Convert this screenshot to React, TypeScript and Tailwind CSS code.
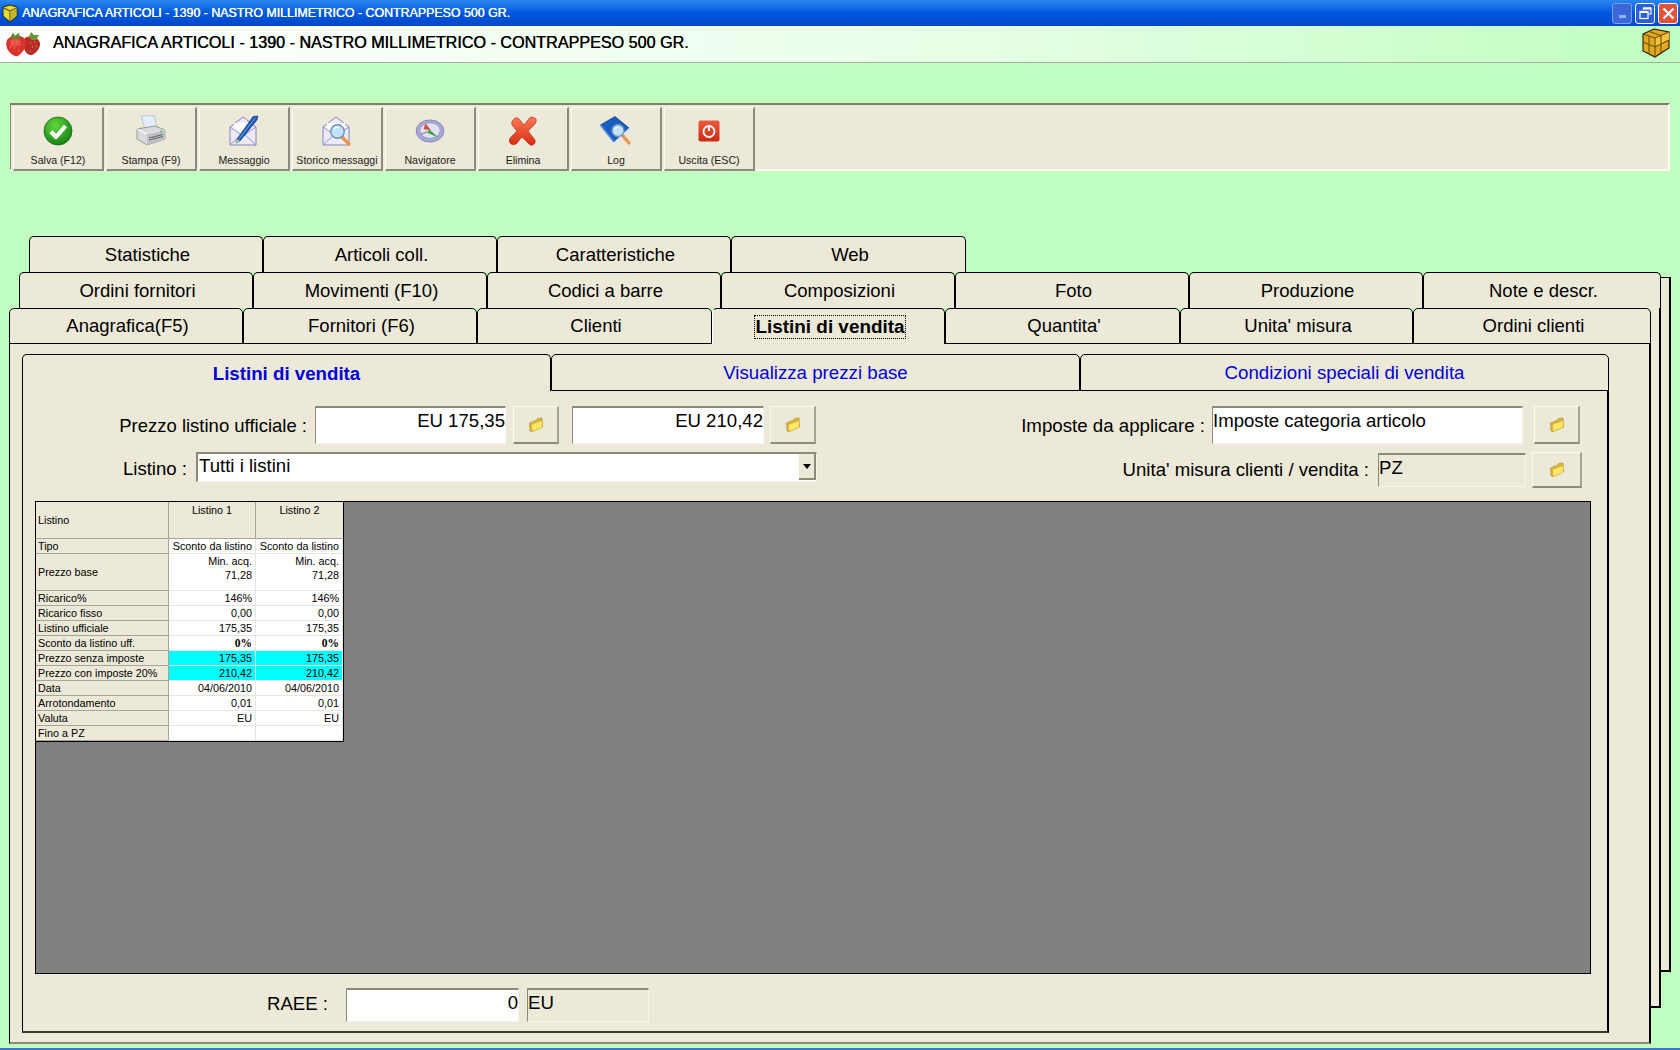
import type { ReactNode } from "react";

const TAB_ROW_1 = [["Statistiche", 234], ["Articoli coll.", 234], ["Caratteristiche", 234], ["Web", 235]] as const;
const TAB_ROW_2 = [["Ordini fornitori", 234], ["Movimenti (F10)", 234], ["Codici a barre", 234], ["Composizioni", 234], ["Foto", 234], ["Produzione", 234], ["Note e descr.", 238]] as const;
const TAB_ROW_3 = [["Anagrafica(F5)", 234], ["Fornitori (F6)", 234], ["Clienti", 235], ["Listini di vendita", 233], ["Quantita'", 235], ["Unita' misura", 233], ["Ordini clienti", 238]] as const;

const PRICE_ROWS = [
    { label: "Tipo", h: "h-[15px]", value: "Sconto da listino" },
    { label: "Prezzo base", h: "h-[37px]", value: "Min. acq.", second: "71,28" },
    { label: "Ricarico%", h: "h-[15px]", value: "146%" },
    { label: "Ricarico fisso", h: "h-[15px]", value: "0,00" },
    { label: "Listino ufficiale", h: "h-[15px]", value: "175,35" },
    { label: "Sconto da listino uff.", h: "h-[15px]", value: "0%", bold: true },
    { label: "Prezzo senza imposte", h: "h-[15px]", value: "175,35", cyan: true },
    { label: "Prezzo con imposte 20%", h: "h-[15px]", value: "210,42", cyan: true },
    { label: "Data", h: "h-[15px]", value: "04/06/2010" },
    { label: "Arrotondamento", h: "h-[15px]", value: "0,01" },
    { label: "Valuta", h: "h-[15px]", value: "EU" },
    { label: "Fino a PZ", h: "h-[15px]", value: "" },
];

function Tab({ label, width, active, bottom }: { label: string; width: number; active?: boolean; bottom?: boolean }) {
    return (
        <div
            className={`h-[36px] shrink-0 flex items-center justify-center pl-[3px] rounded-t-[5px] border-t border-l border-r border-black bg-[#ece9d8] text-[18.5px] text-black ${bottom && !active ? "border-b" : ""} ${active ? "font-bold border-l-white" : ""}`}
            style={{ width }}
        >
            {active ? <span className="border border-dotted border-black leading-[22px] text-[18.9px]">{label}</span> : label}
        </div>
    );
}

function InnerTab({ label, width, active }: { label: string; width: number; active?: boolean }) {
    return (
        <div
            className={`h-[37px] shrink-0 flex items-center justify-center pt-[2px] rounded-t-[5px] border-t border-l border-r border-black bg-[#ece9d8] text-[18.7px] text-[#0000d8] ${active ? "font-bold" : "border-b"}`}
            style={{ width }}
        >
            {label}
        </div>
    );
}

function Sunken({ width, height, right, muted, children }: { width: string; height: string; right?: boolean; muted?: boolean; children: ReactNode }) {
    return (
        <div className={`${width} ${height} shrink-0 border-t-2 border-l border-b border-r border-t-[#8c8a7c] border-l-[#8c8a7c] border-b-[#f6f5ec] border-r-[#f6f5ec] text-[18.6px] leading-[26px] text-black ${right ? "text-right" : ""} ${muted ? "bg-[#ece9d8]" : "bg-white"}`}>
            {children}
        </div>
    );
}

function FolderButton({ width, height }: { width: string; height: string }) {
    return (
        <div className={`${width} ${height} shrink-0 flex items-center justify-center border-t border-l border-b-2 border-r-2 border-t-[#fbfaf4] border-l-[#fbfaf4] border-b-[#8c8a7c] border-r-[#a5a294] bg-[#ece9d8]`}>
            <svg width="16" height="16" viewBox="0 0 16 16">
                <path d="M1.5 6 L8.5 3 L9.5 1.5 L14 1 L14.5 10 L4 14.5 L2 14 Z" fill="#d9b53a" stroke="#a98a2c" strokeWidth="0.6" />
                <path d="M3.5 7.5 L14.5 3.5 L14 10.5 L4 14.5 Z" fill="#ffe866" stroke="#c9a636" strokeWidth="0.5" />
            </svg>
        </div>
    );
}

function PriceTable() {
    return (
        <div className="w-[308px] border-r border-b border-black text-[10.8px] leading-[14px] text-black">
            <div className="grid grid-cols-[133px_87px_87px] h-[37px] bg-[#ece9d8] border-b border-[#a8a596]">
                <div className="flex items-center pl-[2px] border-r border-[#a8a596]">Listino</div>
                <div className="text-center pt-[1px] border-r border-[#a8a596]">Listino 1</div>
                <div className="text-center pt-[1px]">Listino 2</div>
            </div>
            {PRICE_ROWS.map((row) => (
                <div key={row.label} className={`grid grid-cols-[133px_87px_87px] ${row.h} ${row.second ? "" : "leading-[13px]"}`}>
                    <div className={`flex items-center pl-[2px] bg-[#ece9d8] border-r border-b border-[#a8a596] ${row.second ? "" : "pt-[1px]"}`}>{row.label}</div>
                    {[0, 1].map((col) => (
                        <div
                            key={col}
                            className={`text-right pr-[3px] border-b border-r border-[#e6e6de] ${row.second ? "" : "pt-[1px]"} ${row.cyan ? "bg-[#00ffff]" : "bg-white"} ${row.bold ? "font-['Liberation_Serif'] font-bold text-[11.5px]" : ""}`}
                        >
                            <div>{row.value}</div>
                            {row.second && <div>{row.second}</div>}
                        </div>
                    ))}
                </div>
            ))}
        </div>
    );
}

function ToolButton({ label, children }: { label: string; children: ReactNode }) {
    return (
        <div className="w-[91px] h-[64px] shrink-0 flex flex-col items-center border-t border-l border-b-2 border-r-2 border-t-[#fbfaf4] border-l-[#fbfaf4] border-b-[#8c8a7c] border-r-[#8c8a7c] bg-[#ece9d8]">
            <div className="h-[44px] mt-[1px] flex items-center justify-center">{children}</div>
            <div className="text-[10.6px] leading-[14px] text-[#1a1a1a] whitespace-nowrap">{label}</div>
        </div>
    );
}

function CheckIcon() {
    return (
        <svg width="30" height="30" viewBox="0 0 30 30">
            <defs>
                <radialGradient id="ck" cx="0.4" cy="0.3" r="0.8">
                    <stop offset="0" stopColor="#63d83c" />
                    <stop offset="1" stopColor="#0c7a12" />
                </radialGradient>
            </defs>
            <circle cx="15" cy="15" r="14" fill="url(#ck)" stroke="#16661a" strokeWidth="0.8" />
            <path d="M8 15.5 L13 21 L22.5 10" fill="none" stroke="#fff" strokeWidth="4.2" strokeLinejoin="round" />
        </svg>
    );
}

function PrinterIcon() {
    return (
        <svg width="32" height="32" viewBox="0 0 32 32">
            <path d="M6 1 L19 0.5 L22 12 L10 14 Z" fill="#e4eefa" stroke="#9fb3c8" strokeWidth="0.7" />
            <path d="M2 14 L20 11 L30 15 L30 24 L12 30 L2 24 Z" fill="#d9dadb" stroke="#85888c" strokeWidth="0.8" />
            <path d="M2 14 L12 19 L30 15" fill="none" stroke="#f6f6f6" strokeWidth="1.2" />
            <path d="M12 19 L12 30 L30 24 L30 15 Z" fill="#bfc1c4" />
            <path d="M14 23 L28 19.5 M14 25 L28 21.5" stroke="#5d6064" strokeWidth="1" />
            <circle cx="26" cy="16.5" r="1" fill="#4fbf4c" />
        </svg>
    );
}

function EnvelopeIcon({ children }: { children: ReactNode }) {
    return (
        <svg width="32" height="32" viewBox="0 0 32 32">
            <path d="M2 12 L15 2 L28 12 L28 30 L2 30 Z" fill="#eceaf8" stroke="#7b78b8" strokeWidth="0.9" />
            <path d="M2 30 L15 18 L28 30 M2 12 L15 21 L28 12" fill="none" stroke="#8d8ac8" strokeWidth="0.9" />
            <path d="M6 13 L6 8 L24 8 L24 13 L15 20 Z" fill="#fff" />
            {children}
        </svg>
    );
}

function PenEnvelopeIcon() {
    return (
        <EnvelopeIcon>
            <path d="M30 1 L25 1.5 L9 24 L8 28 L12 26 L29 5 Z" fill="#1d58b4" stroke="#123c80" strokeWidth="0.6" />
            <path d="M27 3 L11 24" stroke="#7ba8ea" strokeWidth="1" />
            <path d="M9 24 L8 28 L12 26 Z" fill="#d8c9a0" />
        </EnvelopeIcon>
    );
}

function SearchEnvelopeIcon() {
    return (
        <EnvelopeIcon>
            <path d="M21 22 L28 29" stroke="#e9954a" strokeWidth="3.4" strokeLinecap="round" />
            <circle cx="16.5" cy="16.5" r="6.8" fill="#bfe3fa" stroke="#6d8fb8" strokeWidth="1.4" />
            <path d="M13 14 A5 5 0 0 1 18 12.5" fill="none" stroke="#fff" strokeWidth="1.4" />
        </EnvelopeIcon>
    );
}

function CompassIcon() {
    return (
        <svg width="30" height="24" viewBox="0 0 32 26">
            <ellipse cx="16" cy="13" rx="15" ry="12" fill="#a8a8d6" stroke="#7d7db0" strokeWidth="0.9" />
            <ellipse cx="16" cy="12.5" rx="11" ry="8.5" fill="#dfe2f2" stroke="#8f8fbd" strokeWidth="0.8" />
            <path d="M11 5 L17 12 L9 11 Z" fill="#d84a3a" />
            <path d="M15 11 L25 20 L13 15 Z" fill="#3f9a46" />
            <path d="M5 17 L13 14" stroke="#8f8fbe" strokeWidth="1.4" />
        </svg>
    );
}

function DeleteIcon() {
    return (
        <svg width="30" height="30" viewBox="0 0 30 30">
            <defs>
                <linearGradient id="dx" x1="0" y1="0" x2="0" y2="1">
                    <stop offset="0" stopColor="#ff7a55" />
                    <stop offset="1" stopColor="#d52c14" />
                </linearGradient>
            </defs>
            <path d="M5 4 Q8 0 11 3 L16 9 L22 1.5 Q25 0 28 3 Q29 5 27 8 L20 15 L27 24 Q28 27 25 29 Q22 30 20 27 L14 21 L8 28 Q4 30 2 27 Q0 24 3 21 L9 15 L4 9 Q3 6 5 4 Z" fill="url(#dx)" stroke="#b3301c" strokeWidth="0.7" />
        </svg>
    );
}

function LogIcon() {
    return (
        <svg width="32" height="30" viewBox="0 0 32 30">
            <path d="M0.5 9 L15 0.5 L29 12 L14 26 Z" fill="#1a5fc0" stroke="#0f3f8c" strokeWidth="0.8" />
            <path d="M14 26 L16 28 L30 14 L29 12 Z" fill="#dfe8f4" />
            <path d="M0.5 9 L14 26" stroke="#4e8de0" strokeWidth="1.6" />
            <path d="M23 20 L29 27" stroke="#e9954a" strokeWidth="3.2" strokeLinecap="round" />
            <circle cx="18" cy="14.5" r="6" fill="#c3e2f7" stroke="#6d8fb8" strokeWidth="1.3" />
            <path d="M15 13 A4 4 0 0 1 18.5 11" fill="none" stroke="#fff" strokeWidth="1.2" />
        </svg>
    );
}

function ExitIcon() {
    return (
        <svg width="22" height="22" viewBox="0 0 22 22">
            <defs>
                <linearGradient id="ex" x1="0" y1="0" x2="0" y2="1">
                    <stop offset="0" stopColor="#f05a3c" />
                    <stop offset="1" stopColor="#c82a16" />
                </linearGradient>
            </defs>
            <rect x="0.5" y="0.5" width="21" height="21" rx="2" fill="url(#ex)" />
            <circle cx="11" cy="11.5" r="5.5" fill="none" stroke="#fff" strokeWidth="1.8" />
            <path d="M11 5.5 L11 11" stroke="#fff" strokeWidth="2" />
        </svg>
    );
}

function ShieldIcon() {
    return (
        <svg width="16" height="19" viewBox="0 0 16 19">
            <path d="M1 3 L8 1 L15 3 L15 12 L8 18 L1 12 Z" fill="#e6d83a" stroke="#26260c" strokeWidth="1" />
            <path d="M1.5 4 L8 7 L14.5 4 M8 7 L8 17" stroke="#4c4c10" strokeWidth="1.1" fill="none" />
            <path d="M8 7 L14.5 4 L14.5 12 L8 17 Z" fill="#b7a82a" opacity="0.7" />
        </svg>
    );
}

function StrawberryIcon() {
    return (
        <svg width="36" height="26" viewBox="0 0 36 26">
            <path d="M20 7 C27 3 36 8 35 14 C34 20 28 25 25 24 C20 23 16 14 20 7 Z" fill="#b92c26" />
            <path d="M2 9 C5 4 16 3 20 8 C23 13 19 21 13 25 C9 26 4 22 2 17 C1 14 1 11 2 9 Z" fill="#d8342b" />
            <path d="M5 10 C8 7 13 7 16 10 C15 15 10 17 6 15 Z" fill="#ee5f50" opacity="0.7" />
            <path d="M7 12 h1 M11 11 h1 M14 14 h1 M9 17 h1 M13 19 h1 M5 16 h1 M25 12 h1 M29 11 h1 M27 16 h1 M31 15 h1 M25 20 h1" stroke="#f2b47a" strokeWidth="0.9" />
            <path d="M5 7 L8 1.5 L10 5 L14 1.5 L15 7 L11 8 Z" fill="#5f8a2c" />
            <path d="M24 6 L26 1 L29 4 L34 4 L31 9 L27 9 Z" fill="#6c9634" />
        </svg>
    );
}

function BoxIcon() {
    return (
        <svg width="30" height="30" viewBox="0 0 30 30">
            <path d="M3 6 L14 1 L29 4 L29 20 L15 29 L3 23 Z" fill="#e2a822" stroke="#1e1a08" strokeWidth="1.1" />
            <path d="M15 10 L29 4 L29 12 L15 19 Z" fill="#f4c238" />
            <path d="M3 6 L15 10 L29 4" fill="none" stroke="#6e520e" strokeWidth="1.1" />
            <path d="M15 10 L15 29 M3 14 L15 19 L29 12 M9 3.5 L21 7.5 M9 8 L9 25.5 M21 7 L21 25" fill="none" stroke="#6e520e" strokeWidth="1.1" />
        </svg>
    );
}

function WindowButtons() {
    return (
        <div className="flex items-center gap-[3px] mr-[2px]">
            <div className="w-[20px] h-[21px] rounded-[3px] border border-[#7aa0ec] bg-[#3a68d8] flex items-end justify-center pb-[5px]">
                <div className="w-[7px] h-[3px] bg-[#8fb0f0]" />
            </div>
            <div className="w-[20px] h-[21px] rounded-[3px] border border-white bg-[#2c5ed8] flex items-center justify-center">
                <svg width="13" height="13" viewBox="0 0 13 13" fill="none" stroke="#fff" strokeWidth="1.2">
                    <path d="M4.5 3 V1 H12 V7 H9" />
                    <rect x="1" y="4.5" width="8" height="7" />
                    <path d="M1 5 H9 M4.5 1.5 H12" strokeWidth="2" />
                </svg>
            </div>
            <div className="w-[20px] h-[21px] rounded-[3px] border border-white bg-[#e0533a] flex items-center justify-center">
                <svg width="13" height="13" viewBox="0 0 13 13" stroke="#fff" strokeWidth="2.2">
                    <path d="M1.5 1.5 L11.5 11.5 M11.5 1.5 L1.5 11.5" />
                </svg>
            </div>
        </div>
    );
}

export default function App() {
    return (
        <div className="w-[1680px] h-[1050px] overflow-hidden flex flex-col bg-[#c0ffc0] font-['Liberation_Sans',Arial,sans-serif]">
            <div className="h-[26px] shrink-0 flex items-center justify-between bg-gradient-to-b from-[#2a86f0] via-[#0058e0] to-[#0048c8]">
                <div className="flex items-center pl-[2px]">
                    <ShieldIcon />
                    <span className="ml-[4px] text-[12.4px] text-white [text-shadow:0.4px_0_0_#fff]">ANAGRAFICA ARTICOLI - 1390 - NASTRO MILLIMETRICO - CONTRAPPESO 500 GR.</span>
                </div>
                <WindowButtons />
            </div>

            <div className="h-[37px] shrink-0 flex items-center justify-between border-b border-[#a9b0a4] bg-gradient-to-r from-white via-[#ecffec] via-50% to-[#c0ffc0]">
                <div className="flex items-center pl-[5px]">
                    <StrawberryIcon />
                    <span className="ml-[12px] mb-[3px] text-[16.15px] text-black [text-shadow:0.3px_0_0_#000]">ANAGRAFICA ARTICOLI - 1390 - NASTRO MILLIMETRICO - CONTRAPPESO 500 GR.</span>
                </div>
                <div className="mr-[10px] mb-[3px]">
                    <BoxIcon />
                </div>
            </div>

            <div className="ml-[10px] mt-[40px] w-[1660px] h-[68px] shrink-0 flex gap-[2px] pt-[2px] pl-[2px] bg-[#ece9d8] border-t-2 border-l border-b-2 border-r-2 border-t-[#7f7d6e] border-l-[#8c8a7c] border-b-[#fbfaf4] border-r-[#fbfaf4]">
                <ToolButton label="Salva (F12)"><CheckIcon /></ToolButton>
                <ToolButton label="Stampa (F9)"><PrinterIcon /></ToolButton>
                <ToolButton label="Messaggio"><PenEnvelopeIcon /></ToolButton>
                <ToolButton label="Storico messaggi"><SearchEnvelopeIcon /></ToolButton>
                <ToolButton label="Navigatore"><CompassIcon /></ToolButton>
                <ToolButton label="Elimina"><DeleteIcon /></ToolButton>
                <ToolButton label="Log"><LogIcon /></ToolButton>
                <ToolButton label="Uscita (ESC)"><ExitIcon /></ToolButton>
            </div>

            <div className="mt-[65px] flex items-start">
                <div className="w-[1661px] shrink-0">
                    <div className="flex ml-[29px]">
                        {TAB_ROW_1.map(([label, width]) => <Tab key={label} label={label} width={width} />)}
                    </div>
                    <div className="flex ml-[19px]">
                        {TAB_ROW_2.map(([label, width]) => <Tab key={label} label={label} width={width} />)}
                    </div>
                    <div className="flex items-start">
                        <div className="ml-[9px] w-[1642px] shrink-0">
                            <div className="flex">
                                {TAB_ROW_3.map(([label, width]) => <Tab key={label} label={label} width={width} bottom active={label === "Listini di vendita"} />)}
                            </div>
                            <div className="h-[700px] pt-[10px] pl-[12px] bg-[#ece9d8] border-l border-r-2 border-b-2 border-l-black border-r-black border-b-[#8f8a78]">
                                <div className="flex">
                                    <InnerTab label="Listini di vendita" width={529} active />
                                    <InnerTab label="Visualizza prezzi base" width={529} />
                                    <InnerTab label="Condizioni speciali di vendita" width={529} />
                                </div>
                                <div className="w-[1587px] h-[642px] pt-[15px] border-l border-r-2 border-b-2 border-l-black border-r-black border-b-[#3a3830]">
                                    <div className="flex h-[82px]">
                                        <div className="w-[794px] shrink-0">
                                            <div className="flex items-center">
                                                <div className="w-[284px] shrink-0 text-right text-[18.5px] text-black pt-[2px]">Prezzo listino ufficiale :</div>
                                                <div className="ml-[8px]"><Sunken width="w-[191px]" height="h-[38px]" right>EU 175,35</Sunken></div>
                                                <div className="ml-[7px]"><FolderButton width="w-[46px]" height="h-[38px]" /></div>
                                                <div className="ml-[13px]"><Sunken width="w-[192px]" height="h-[38px]" right>EU 210,42</Sunken></div>
                                                <div className="ml-[6px]"><FolderButton width="w-[46px]" height="h-[38px]" /></div>
                                            </div>
                                            <div className="flex items-center mt-[7px]">
                                                <div className="w-[164px] shrink-0 text-right text-[18.6px] text-black pt-[4px]">Listino :</div>
                                                <div className="ml-[9px] w-[621px] h-[30px] shrink-0 flex items-center justify-between bg-white border-t-2 border-l-2 border-b border-r border-t-[#8c8a7c] border-l-[#8c8a7c] border-b-[#f6f5ec] border-r-[#f6f5ec] pl-[1px] text-[18.6px] text-black">
                                                    <span className="-mt-[3px]">Tutti i listini</span>
                                                    <div className="w-[17px] h-[26px] flex items-center justify-center bg-[#ece9d8] border-r-2 border-b-2 border-r-[#8c8a7c] border-b-[#8c8a7c]">
                                                        <svg width="8" height="5" viewBox="0 0 8 5"><path d="M0 0 H8 L4 5 Z" fill="#000" /></svg>
                                                    </div>
                                                </div>
                                            </div>
                                        </div>
                                        <div className="shrink-0">
                                            <div className="flex items-center">
                                                <div className="w-[388px] shrink-0 text-right text-[18.7px] text-black pt-[2px]">Imposte da applicare :</div>
                                                <div className="ml-[7px]"><Sunken width="w-[311px]" height="h-[38px]">Imposte categoria articolo</Sunken></div>
                                                <div className="ml-[11px]"><FolderButton width="w-[46px]" height="h-[38px]" /></div>
                                            </div>
                                            <div className="flex items-center mt-[8px]">
                                                <div className="w-[552px] shrink-0 text-right text-[18.6px] text-black">Unita' misura clienti / vendita :</div>
                                                <div className="ml-[9px]"><Sunken width="w-[148px]" height="h-[34px]" muted>PZ</Sunken></div>
                                                <div className="ml-[6px]"><FolderButton width="w-[50px]" height="h-[36px]" /></div>
                                            </div>
                                        </div>
                                    </div>
                                    <div className="ml-[12px] mt-[13px] w-[1556px] h-[473px] bg-[#808080] border border-black">
                                        <PriceTable />
                                    </div>
                                    <div className="flex items-center mt-[14px]">
                                        <div className="w-[305px] shrink-0 text-right text-[18.6px] text-black -mt-[2px]">RAEE :</div>
                                        <div className="ml-[18px]"><Sunken width="w-[173px]" height="h-[34px]" right>0</Sunken></div>
                                        <div className="ml-[8px]"><Sunken width="w-[122px]" height="h-[34px]" muted>EU</Sunken></div>
                                    </div>
                                </div>
                            </div>
                        </div>
                        <div className="w-[10px] h-[700px] shrink-0 bg-[#ece9d8] border-r-2 border-b-2 border-r-black border-b-black" />
                    </div>
                </div>
                <div className="mt-[41px] w-[10px] h-[695px] shrink-0 bg-[#ece9d8] border-t border-r-2 border-b-2 border-black" />
            </div>

            <div className="mt-auto h-[2px] shrink-0 bg-[#3c7ac8]" />
        </div>
    );
}
